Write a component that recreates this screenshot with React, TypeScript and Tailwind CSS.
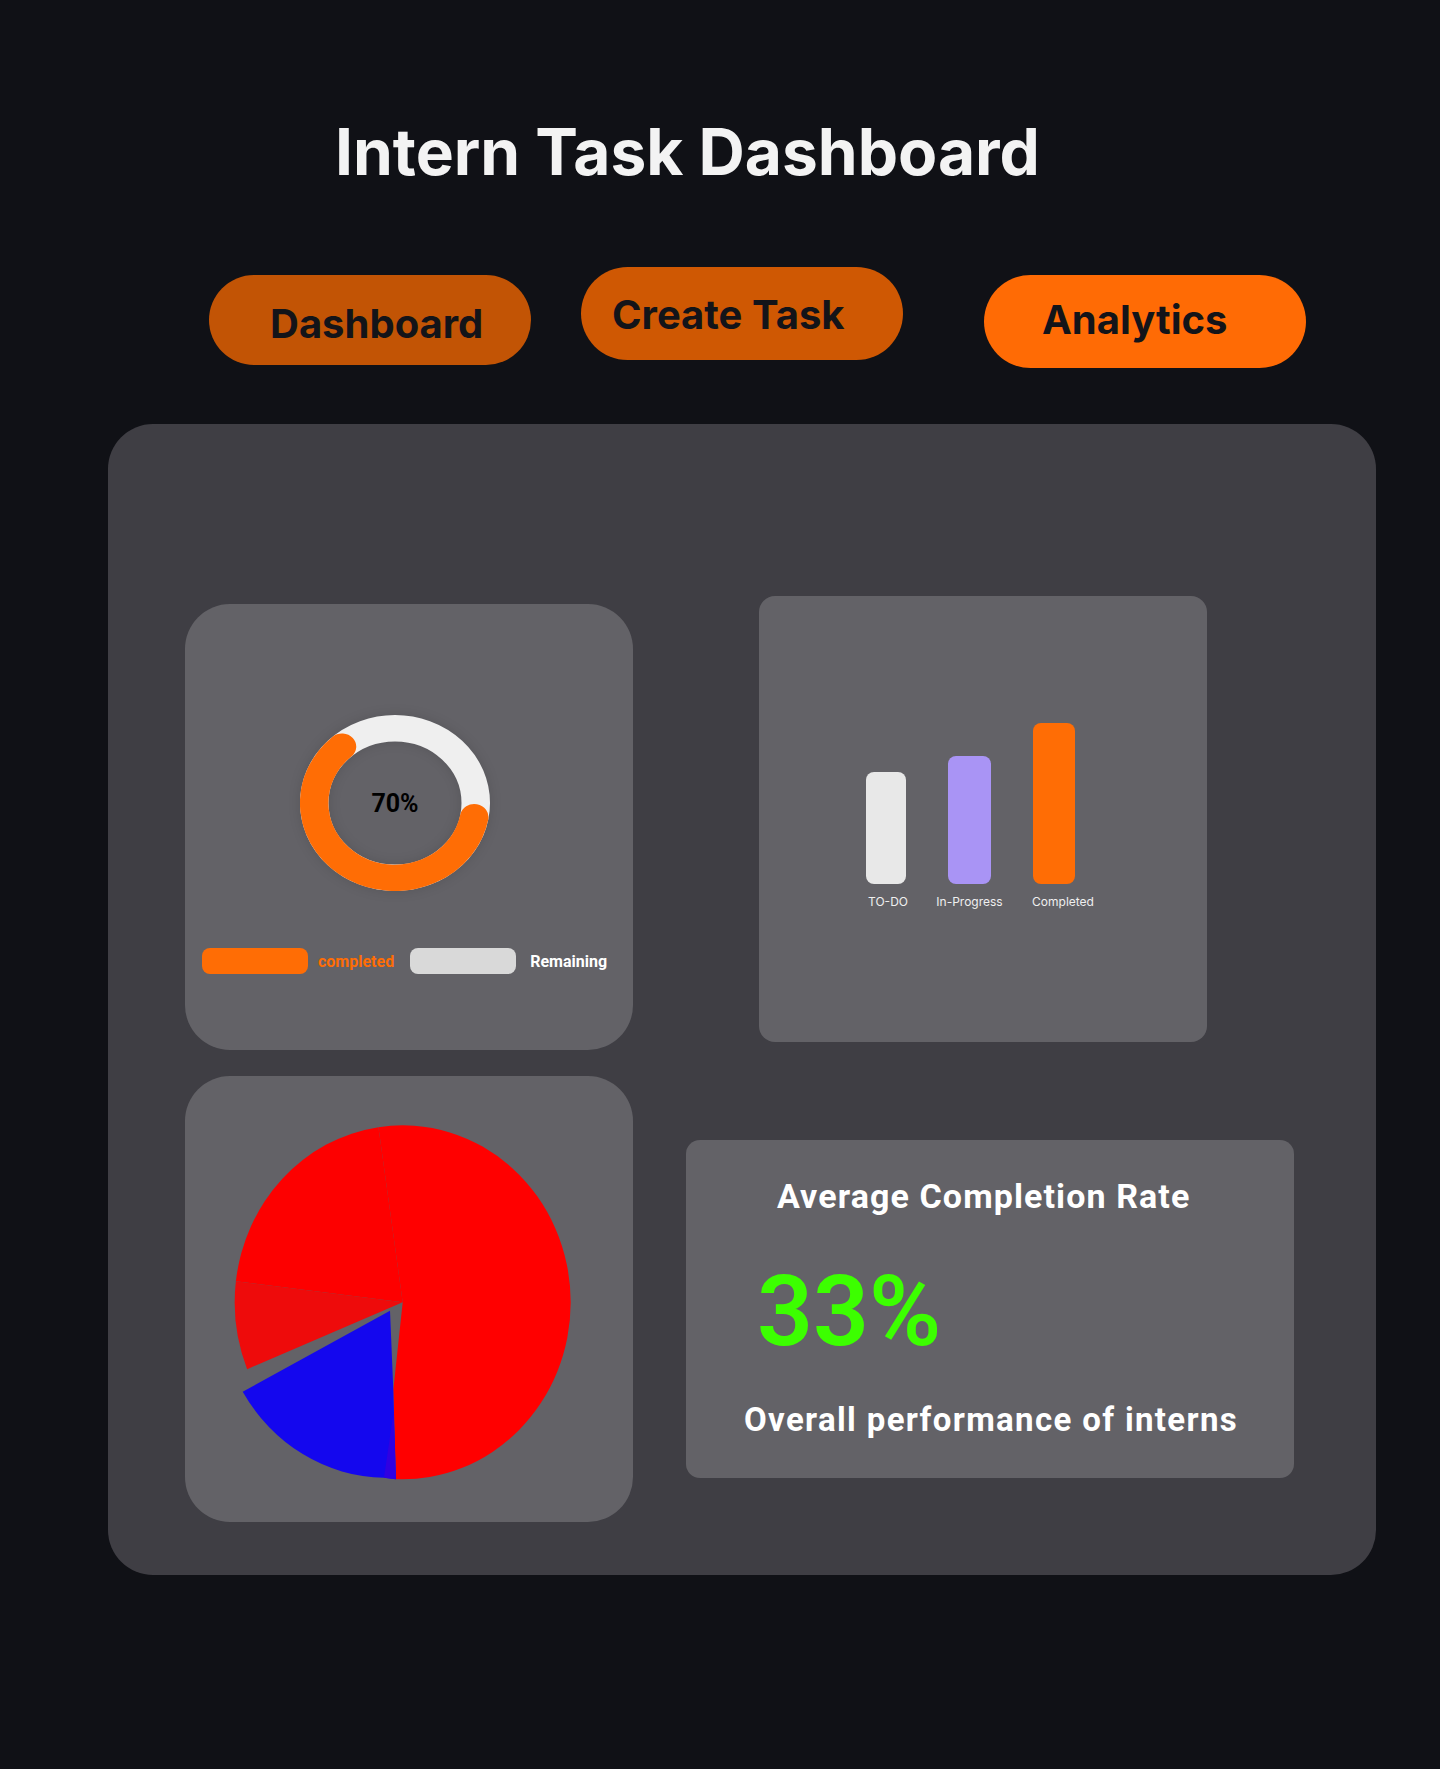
import React from "react";

function Donut() {
  return (
    <div className="relative ml-[115px] h-[176px] w-[190px]">
      <svg
        viewBox="0 0 200 200"
        preserveAspectRatio="none"
        className="block h-full w-full"
        style={{ filter: "drop-shadow(0 0 6px rgba(0,0,0,0.12))" }}
      >
        <circle cx="100" cy="100" r="85" fill="none" stroke="#efefef" strokeWidth="30" />
        <path
          d="M 183.4 116.2 A 85 85 0 1 1 44.2 35.9"
          fill="none"
          stroke="#ff6d05"
          strokeWidth="30"
          strokeLinecap="round"
        />
      </svg>
      <div className="absolute inset-0 flex items-center justify-center">
        <span className="font-['Roboto',sans-serif] text-[25px] font-bold leading-none text-black">70%</span>
      </div>
    </div>
  );
}

function Pie() {
  return (
    <svg viewBox="0 0 448 446" width="448" height="446" className="block">
      <path
        d="M 217.7 226.3 L 193.45 51.15 A 168 177 0 0 1 385.7 226.3 A 168 177 0 0 1 210.96 403.16 L 208.3 314 Z"
        fill="#ff0000"
      />
      <path d="M 217.7 226.3 L 50.88 205.34 A 168 177 0 0 1 193.45 51.15 Z" fill="#fd0000" />
      <path d="M 217.7 226.3 L 62.15 293.18 A 168 177 0 0 1 50.88 205.34 Z" fill="#ee0b0b" />
      <path d="M 205 234.7 L 57.7 315.7 A 168 177 0 0 0 199 401.8 L 210.96 403.16 L 208.3 314 Z" fill="#1407ee" />
      <path d="M 208.6 336 L 199 401.8 L 210.96 403.16 Z" fill="#3000e2" />
    </svg>
  );
}

export default function App() {
  return (
    <div className="min-h-[1769px] w-full bg-[#101116] pt-[120px] font-['Inter',sans-serif]">
      <h1 className="pl-[335px] text-[64px] font-bold leading-none text-[#f3f3f3]">Intern Task Dashboard</h1>

      <div className="mt-[83px] flex items-start pl-[209px]">
        <div className="mt-[8px] flex h-[90px] w-[322px] items-center rounded-full bg-[#c25405] pl-[61px] pt-[8px]">
          <span className="text-[40px] font-bold leading-none text-[#131419]">Dashboard</span>
        </div>
        <div className="ml-[50px] flex h-[93px] w-[322px] items-center rounded-full bg-[#cf5803] pl-[31px] pt-[3px]">
          <span className="text-[40px] font-bold leading-none text-[#131419]">Create Task</span>
        </div>
        <div className="ml-[81px] mt-[8px] flex h-[93px] w-[322px] items-center rounded-full bg-[#ff6b05] pb-[3px] pl-[58px]">
          <span className="text-[40px] font-bold leading-none text-[#131419]">Analytics</span>
        </div>
      </div>

      <div className="ml-[108px] mt-[56px] h-[1151px] w-[1268px] rounded-[45px] bg-[#3f3e44] pl-[77px] pt-[172px]">
        <div className="flex items-start">
          <div className="mt-[8px] flex h-[446px] w-[448px] flex-col rounded-[45px] bg-[#636267] pt-[111px]">
            <Donut />
            <div className="ml-[17px] mt-[57px] flex items-center font-['Roboto',sans-serif] text-[16px] font-bold leading-none">
              <div className="h-[26px] w-[106px] rounded-[8px] bg-[#ff6d05]" />
              <span className="ml-[10px] pt-[2px] text-[#ff6d05]">completed</span>
              <div className="ml-[16px] h-[26px] w-[106px] rounded-[8px] bg-[#d9d9d9]" />
              <span className="ml-[14px] pt-[2px] text-white">Remaining</span>
            </div>
          </div>

          <div className="ml-[126px] h-[446px] w-[448px] rounded-[16px] bg-[#636267] pl-[107px] pt-[127px]">
            <div className="flex items-end">
              <div className="flex w-[40px] flex-col items-center">
                <div className="h-[112px] w-[40px] rounded-[8px] bg-[#e8e8e8]" />
                <span className="ml-[4px] mt-[10px] whitespace-nowrap text-[12px] leading-[16px] text-[#efefef]">TO-DO</span>
              </div>
              <div className="ml-[42px] flex w-[43px] flex-col items-center">
                <div className="h-[128px] w-[43px] rounded-[8px] bg-[#a994f5]" />
                <span className="mt-[10px] whitespace-nowrap text-[12px] leading-[16px] text-[#efefef]">In-Progress</span>
              </div>
              <div className="ml-[42px] flex w-[42px] flex-col items-center">
                <div className="h-[161px] w-[42px] rounded-[8px] bg-[#ff6d05]" />
                <span className="ml-[18px] mt-[10px] whitespace-nowrap text-[12px] leading-[16px] text-[#efefef]">Completed</span>
              </div>
            </div>
          </div>
        </div>

        <div className="mt-[26px] flex items-start">
          <div className="h-[446px] w-[448px] overflow-hidden rounded-[45px] bg-[#636267]">
            <Pie />
          </div>
          <div className="ml-[53px] mt-[64px] h-[338px] w-[608px] rounded-[14px] bg-[#636267] pt-[39px] font-['Roboto',sans-serif] text-white">
            <div className="pl-[91px] text-[34px] font-bold leading-none tracking-[1.1px]">Average Completion Rate</div>
            <div className="mt-[50px] pl-[71px] text-[98px] font-semibold leading-none text-[#3cff00]">33%</div>
            <div className="mt-[42px] pl-[58px] text-[33px] font-bold leading-none tracking-[1.35px]">Overall performance of interns</div>
          </div>
        </div>
      </div>
    </div>
  );
}
